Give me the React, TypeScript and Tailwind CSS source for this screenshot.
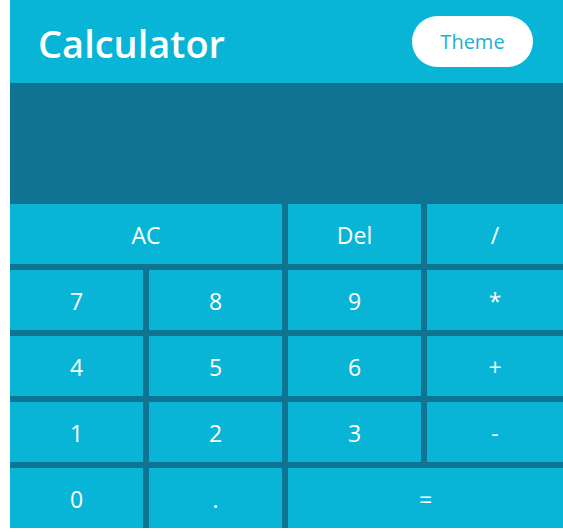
import React from "react";

const font = { fontFamily: '"Open Sans", "Noto Sans", sans-serif' };

function Key({ label, className = "" }: { label: string; className?: string }) {
  return (
    <button
      className={`bg-[#08b5d6] text-white text-[23px] flex items-center justify-center leading-none pt-[2px] ${className}`}
      style={font}
    >
      {label}
    </button>
  );
}

export default function App() {
  return (
    <div className="ml-[10px] w-[553px] bg-[#0f7391]" style={font}>
      <div className="h-[83px] bg-[#08b5d6] flex items-center justify-between pl-[28px] pr-[30px]">
        <h1 className="text-white text-[38px] font-semibold leading-none pt-[3px]">Calculator</h1>
        <button className="bg-white rounded-full w-[121px] h-[51px] text-[20px] text-[#1cb1d2] flex items-center justify-center">
          Theme
        </button>
      </div>
      <div className="h-[121px]" />
      <div className="grid grid-cols-[133px_133px_133px_136px] gap-[6px] auto-rows-[60px]">
        <Key label="AC" className="col-span-2" />
        <Key label="Del" />
        <Key label="/" />
        <Key label="7" />
        <Key label="8" />
        <Key label="9" />
        <Key label="*" />
        <Key label="4" />
        <Key label="5" />
        <Key label="6" />
        <Key label="+" />
        <Key label="1" />
        <Key label="2" />
        <Key label="3" />
        <Key label="-" />
        <Key label="0" />
        <Key label="." />
        <Key label="=" className="col-span-2" />
      </div>
    </div>
  );
}
